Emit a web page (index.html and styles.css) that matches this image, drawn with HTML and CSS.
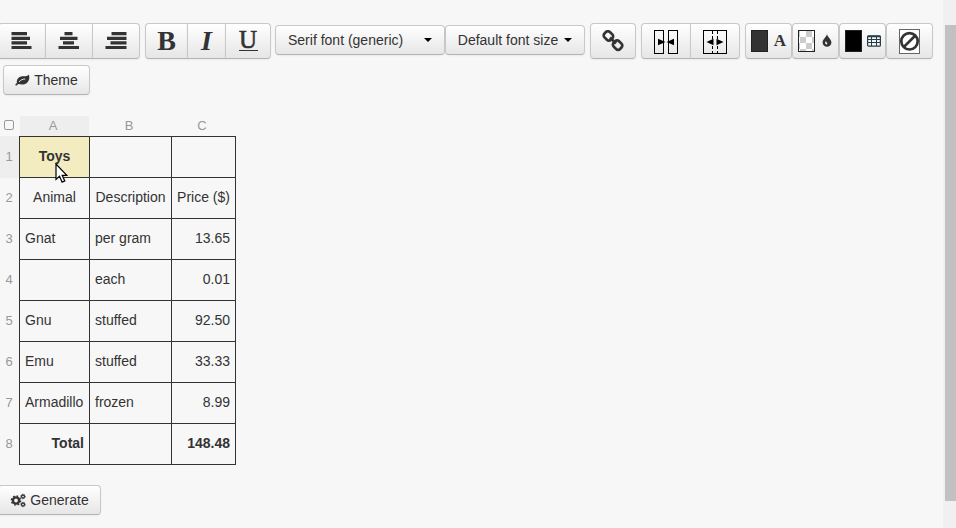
FILE: index.html
```
<!DOCTYPE html>
<html lang="en">
<head>
<meta charset="utf-8">
<title>Table editor</title>
<link rel="stylesheet" href="styles.css">
</head>
<body>
<main class="editor">
  <div class="toolbar">
    <div class="group align-group">
      <button class="btn"><svg width="24" height="20" viewBox="0 0 24 20"><path d="M1.500 2.600h15.500M1.500 7.300h18.500M1.500 11.900h15.500M1.500 16.500h20" class="bar"/></svg></button>
      <button class="btn"><svg width="24" height="20" viewBox="0 0 24 20"><path d="M7.500 2.600h8M3 7.300h17.500M6 11.900h11M1.500 16.500h20.500" class="bar"/></svg></button>
      <button class="btn"><svg width="24" height="20" viewBox="0 0 24 20"><path d="M7.500 2.600H22.500M3 7.300H22.500M6.500 11.900H22.500M1.500 16.500H22.500" class="bar"/></svg></button>
    </div>
    <div class="group style-group">
      <button class="btn bold"><span>B</span></button>
      <button class="btn italic"><span>I</span></button>
      <button class="btn underline"><span>U</span></button>
    </div>
    <button class="btn select family"><span>Serif font (generic)</span><i class="caret"></i></button>
    <button class="btn select size"><span>Default font size</span><i class="caret"></i></button>
    <button class="btn link"><svg width="22" height="22" viewBox="0 0 22 22"><g transform="translate(0 -.5) rotate(45 11 11)" class="chain"><rect x="0" y="7.200" width="9" height="7.600" rx="2.800"/><rect x="13" y="7.200" width="9" height="7.600" rx="2.800"/><path d="M6.800 11h8.400"/></g></svg></button>
    <div class="group merge-group">
      <button class="btn"><svg width="24" height="24" viewBox="0 0 24 24" shape-rendering="crispEdges"><path class="thin" d="M.5.5h9v23h-9zM14.500.5h9v23h-9z"/><path class="black" shape-rendering="auto" d="M4 8.700l7.500 3.300-7.500 3.300zM20 8.700L12.500 12l7.500 3.300z"/></svg></button>
      <button class="btn"><svg width="24" height="24" viewBox="0 0 24 24" shape-rendering="crispEdges"><path class="thin" d="M.5.5h23v23H.5z"/><path class="thin" stroke-dasharray="3 2" d="M9.500 1v22M14.500 1v22"/><path class="black" shape-rendering="auto" d="M10.500 8.700L3.500 12l7 3.300zM13.500 8.700l7 3.300-7 3.300z"/></svg></button>
    </div>
    <button class="btn color text-color"><i class="swatch"></i><span>A</span></button>
    <button class="btn color fill-color"><i class="swatch"></i><svg width="10" height="13" viewBox="0 0 10 13"><path fill="#333" d="M5 .3C5.600 3 9.400 5.400 9.400 8.400a4.400 4.400 0 0 1-8.800 0C.6 5.400 4.400 3 5 .3z"/><path d="M3.600 7.500c-1 1.200-.5 2.800.8 2.900 1 0 1.200-1 .6-1.600-.5-.4-.9-.8-.9-1.500z" fill="#eee"/></svg></button>
    <button class="btn color border-color"><i class="swatch"></i><svg width="14" height="12" viewBox="0 0 14 12"><rect x=".6" y=".8" width="12.800" height="10.400" rx="1" fill="#f4f4f4" stroke="#263c46" stroke-width="1.200"/><path d="M.5 1.500h13" stroke="#263c46" stroke-width="1.500"/><path d="M1 4.500h12M1 7.500h12M4.500 1v10M9.500 1v10" stroke="#263c46"/></svg></button>
    <button class="btn clear"><svg width="21" height="25" viewBox="0 0 21 25"><rect x=".5" y=".5" width="20" height="24" fill="#fff" stroke="#666"/><g fill="none" stroke="#333" stroke-width="2.700"><circle cx="10.500" cy="12.300" r="8.200"/><path d="M4.900 17.900L16.100 6.700"/></g></svg></button>
  </div>
  <button class="btn theme"><svg width="15" height="13" viewBox="0 0 15 13"><path fill="#333" d="M13.800.5c1.400 3.600.2 8.300-4.300 9.700-2.400.8-4.500 0-6.100-.1-.8.3-1 1.500-1.900 1.500C.6 11.600.2 10.800.4 10.400c.4-.7 1.500-1 1.500-1.700C1.200 5.200 3.600 2.900 6.300 2.400 9.300 2 12.200 2.800 13.800.5z"/><path d="M4 7.900C6 5.700 7.700 5.100 10.200 5" fill="none" stroke="#eee" stroke-width="1"/></svg><span>Theme</span></button>

  <table class="sheet">
    <colgroup><col class="c0"><col class="ca"><col class="cb"><col class="cc"></colgroup>
    <thead>
      <tr><th><i class="check"></i></th><th class="active">A</th><th>B</th><th>C</th></tr>
    </thead>
    <tbody>
      <tr><th class="active">1</th><td class="center strong picked">Toys</td><td></td><td></td></tr>
      <tr><th>2</th><td class="center">Animal</td><td class="center">Description</td><td class="center">Price ($)</td></tr>
      <tr><th>3</th><td>Gnat</td><td>per gram</td><td class="right">13.65</td></tr>
      <tr><th>4</th><td></td><td>each</td><td class="right">0.01</td></tr>
      <tr><th>5</th><td>Gnu</td><td>stuffed</td><td class="right">92.50</td></tr>
      <tr><th>6</th><td>Emu</td><td>stuffed</td><td class="right">33.33</td></tr>
      <tr><th>7</th><td>Armadillo</td><td>frozen</td><td class="right">8.99</td></tr>
      <tr><th>8</th><td class="right strong">Total</td><td></td><td class="right strong">148.48</td></tr>
    </tbody>
  </table>

  <button class="btn generate"><svg width="16" height="15" viewBox="0 0 16 15"><g fill="none" stroke="#333"><circle cx="6" cy="7.500" r="3.100" stroke-width="2.400"/><circle cx="6" cy="7.500" r="4.600" stroke-width="1.400" stroke-dasharray="1.810 1.800"/><circle cx="13" cy="3.500" r="1.500" stroke-width="1.300"/><circle cx="13" cy="3.500" r="2.300" stroke-width=".8" stroke-dasharray="1 .8"/><circle cx="13" cy="11.500" r="1.500" stroke-width="1.300"/><circle cx="13" cy="11.500" r="2.300" stroke-width=".8" stroke-dasharray="1 .8"/></g></svg><span>Generate</span></button>
</main>
<aside class="scroll"><div class="thumb"></div></aside>
<svg class="cursor" width="13" height="21" viewBox="0 0 13 21"><path d="M1 1v15.500l3.500-3.200 2.600 5.800 2.700-1.200-2.600-5.600h4.600z" fill="#fff" stroke="#000" stroke-width="1.200"/></svg>
</body>
</html>
```
FILE: styles.css
```
* { box-sizing: border-box; }
body {
  margin: 0;
  height: 528px;
  display: flex;
  overflow: hidden;
  background: #f7f7f7;
  color: #333;
  font: 14px/20px "Liberation Sans", Arial, sans-serif;
}
.editor { width: 943px; padding-top: 23px; flex: none; }
svg { display: block; flex: none; }

.btn {
  display: flex;
  align-items: center;
  justify-content: center;
  flex: none;
  height: 36px;
  margin: 0;
  padding: 0;
  border: 1px solid #c8c8c8;
  border-bottom-color: #b3b3b3;
  border-radius: 4px;
  background: linear-gradient(#fff, #e6e6e6);
  box-shadow: inset 0 1px 0 rgba(255, 255, 255, .2), 0 1px 2px rgba(0, 0, 0, .05);
  color: #333;
  font: inherit;
}
.toolbar { display: flex; align-items: flex-start; height: 36px; }
.group { display: flex; flex: none; }
.group .btn + .btn { margin-left: -1px; }
.group .btn:not(:first-child) { border-top-left-radius: 0; border-bottom-left-radius: 0; }
.group .btn:not(:last-child) { border-top-right-radius: 0; border-bottom-right-radius: 0; }

.align-group { margin-left: -2px; }
.align-group .btn { width: 48px; }
.bar { stroke: #333; stroke-width: 3.2; stroke-linejoin: round; stroke-linecap: butt; fill: none; }

.style-group { margin-left: 5px; }
.style-group .btn { font-family: "Liberation Serif", serif; font-weight: bold; font-size: 28px; line-height: 34px; }
.style-group .bold { width: 43px; }
.style-group .italic { width: 39px; font-style: italic; }
.style-group .underline { width: 46px; font-size: 25px; font-weight: normal; }
.underline span { width: 19px; height: 20px; line-height: 17px; border-bottom: 1px solid #333; text-align: center; -webkit-text-stroke: .6px #333; }

.select { height: 30px; margin-top: 2px; }
.family { width: 170px; margin-left: 4px; padding: 0 12px; justify-content: space-between; }
.size { width: 140px; gap: 6px; }
.caret { border: 4px solid transparent; border-top-color: #000; border-bottom: 0; }

.link { width: 46px; margin-left: 5px; }
.chain { fill: none; stroke: #333; stroke-width: 2.7; }

.merge-group { margin-left: 5px; }
.merge-group .btn { width: 50px; padding-top: 2px; }
.thin { fill: none; stroke: #000; }
.black { fill: #000; }

.color { width: 47px; justify-content: space-between; padding: 0 5px; }
.text-color { margin-left: 5px; }
.text-color span { font: bold 17px/20px "Liberation Serif", serif; }
.swatch { width: 17px; height: 22px; border: 1px solid #222; background: #333; }
.fill-color { padding-right: 6px; }
.fill-color svg { margin-bottom: 2px; }
.fill-color .swatch { background: repeating-conic-gradient(#ccc 0 25%, #fff 0 50%) 1px 0 / 12px 12px; }
.border-color { padding-right: 4px; }
.border-color .swatch { background: #000; }
.clear { width: 47px; }

.theme { width: 87px; height: 30px; margin: 6px 0 0 3px; gap: 4px; }

.sheet { table-layout: fixed; width: 236px; margin-top: 21px; border-collapse: separate; border-spacing: 0; }
.c0 { width: 19px; }
.ca { width: 71px; }
.cb { width: 82px; }
.cc { width: 64px; }
.sheet th { padding: 0 1px 1px 0; color: #999; font-size: 13px; font-weight: normal; text-align: center; }
.sheet thead th { height: 20px; line-height: 20px; padding: 0 4px 0 0; }
.sheet th.active { background: #eee; background-clip: padding-box; }
.sheet thead th.active { border: 0 solid transparent; border-width: 0 1px; padding-right: 3px; }
.sheet tbody tr { height: 41px; }
.sheet tbody tr:first-child { height: 42px; }
.sheet td { padding: 0 5px 2px; border: solid #333; border-width: 0 1px 1px 0; white-space: nowrap; }
.sheet td:nth-child(2) { border-left-width: 1px; }
.sheet tbody tr:first-child td { border-top-width: 1px; }
.center { text-align: center; }
.sheet .right { text-align: right; }
.strong { font-weight: bold; }
.picked { background: #f2ecc0; }
.sheet thead th:first-child { padding: 0 0 2px 4px; }
.check { display: block; width: 10px; height: 10px; border: 1px solid #999; border-radius: 2px; }

.generate { width: 103px; height: 30px; margin: 20px 0 0 -2px; gap: 4px; }

.scroll { width: 13px; height: 528px; padding: 25px 0 0 2px; background: #f0f0f0; }
.thumb { height: 476px; background: #c1c1c1; }
.cursor { position: absolute; left: 55px; top: 163px; }
```
